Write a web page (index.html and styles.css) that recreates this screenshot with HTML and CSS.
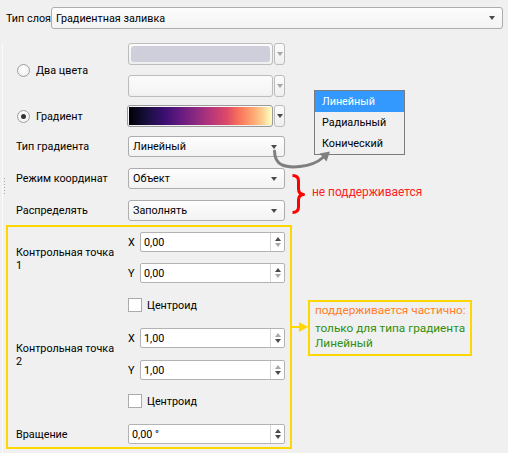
FILE: index.html
```html
<!DOCTYPE html>
<html lang="ru">
<head>
<meta charset="utf-8">
<link rel="stylesheet" href="styles.css">
</head>
<body>
<div class="page">
  <div class="top-row">
    <span class="top-label">Тип слоя</span>
    <div class="combo top-combo"><span>Градиентная заливка</span><i class="arrow"></i></div>
  </div>

  <div class="panel">
    <div class="form">
      <div class="row color-two">
        <div class="lbl"><span class="radio"></span>Два цвета</div>
        <div class="field stack">
          <div class="color-line">
            <div class="color-btn"><div class="swatch grey"></div></div>
            <div class="mini-btn"><i class="arrow light"></i></div>
          </div>
          <div class="color-line">
            <div class="color-btn"><div class="swatch white"></div></div>
            <div class="mini-btn"><i class="arrow light"></i></div>
          </div>
        </div>
      </div>

      <div class="row color-grad">
        <div class="lbl"><span class="radio checked"></span>Градиент</div>
        <div class="field color-line">
          <div class="color-btn grad-btn"><div class="swatch magma"></div></div>
          <div class="mini-btn"><i class="arrow"></i></div>
        </div>
      </div>

      <div class="row combo-row first">
        <div class="lbl">Тип градиента</div>
        <div class="field combo"><span>Линейный</span><i class="arrow"></i></div>
      </div>
      <div class="row combo-row">
        <div class="lbl">Режим координат</div>
        <div class="field combo"><span>Объект</span><i class="arrow"></i></div>
      </div>
      <div class="row combo-row">
        <div class="lbl">Распределять</div>
        <div class="field combo"><span>Заполнять</span><i class="arrow"></i></div>
      </div>
    </div>

    <div class="ybox">
      <div class="point p1">
        <div class="pt-top">
          <div class="lbl">Контрольная точка<br>1</div>
          <div class="xy">
            <div class="xy-row"><span class="axis">X</span><div class="spin"><span>0,00</span><div class="spin-btns"><i class="up"></i><i class="down dim"></i></div></div></div>
            <div class="xy-row second"><span class="axis">Y</span><div class="spin"><span>0,00</span><div class="spin-btns"><i class="up"></i><i class="down dim"></i></div></div></div>
          </div>
        </div>
        <div class="chk-row"><span class="check"></span>Центроид</div>
      </div>

      <div class="point p2">
        <div class="pt-top">
          <div class="lbl">Контрольная точка<br>2</div>
          <div class="xy">
            <div class="xy-row"><span class="axis">X</span><div class="spin"><span>1,00</span><div class="spin-btns"><i class="up dim"></i><i class="down"></i></div></div></div>
            <div class="xy-row second"><span class="axis">Y</span><div class="spin"><span>1,00</span><div class="spin-btns"><i class="up dim"></i><i class="down"></i></div></div></div>
          </div>
        </div>
        <div class="chk-row"><span class="check"></span>Центроид</div>
      </div>

      <div class="rot-row">
        <div class="lbl">Вращение</div>
        <div class="spin rot"><span>0,00 °</span><div class="spin-btns"><i class="up"></i><i class="down"></i></div></div>
      </div>
    </div>
  </div>

  <div class="splitter"></div>

  <!-- annotations -->
  <div class="popup">
    <div class="item sel">Линейный</div>
    <div class="item">Радиальный</div>
    <div class="item">Конический</div>
  </div>

  <svg class="overlay" width="508" height="453" viewBox="0 0 508 453">
    <path d="M274.5 151 C274.5 166 286 168 300 166.5 C311 165.3 318 162 323 157.5" fill="none" stroke="#7f7f7f" stroke-width="3" stroke-linecap="round"/>
    <polygon points="330,151.5 319.5,153.5 326.5,161.5" fill="#7f7f7f"/>
    <path d="M292.5 175.5 Q298.5 175.5 298.5 181 L298.5 189 Q298.5 194 303.5 194.5 Q298.5 195 298.5 200 L298.5 207 Q298.5 212.5 292.5 212.5" fill="none" stroke="#ff0000" stroke-width="3" stroke-linejoin="round"/>
    <line x1="292" y1="327" x2="301" y2="327" stroke="#ffd700" stroke-width="2"/>
    <polygon points="299,322 308,327 299,332" fill="#ffd700"/>
  </svg>

  <div class="note-red">не поддерживается</div>

  <div class="note-box">
    <div class="orange">поддерживается частично:</div>
    <div class="green">только для типа градиента<br>Линейный</div>
  </div>
</div>
</body>
</html>
```

FILE: styles.css
```css
* { box-sizing: border-box; }

html, body {
  margin: 0;
  padding: 0;
  background: #f0f0f0;
}

body {
  font-family: Roboto, "Noto Sans", sans-serif;
  font-size: 10.8px;
  color: #000;
}

.page {
  position: relative;
  width: 508px;
  height: 453px;
  overflow: hidden;
}

/* top row */
.top-row {
  display: flex;
  align-items: center;
  padding: 7px 5px 0 6px;
  height: 29px;
}

.top-label {
  width: 45px;
  flex: none;
  white-space: nowrap;
}

.combo {
  position: relative;
  display: flex;
  align-items: center;
  height: 21px;
  padding-left: 4px;
  border: 1px solid #adadad;
  border-radius: 3px;
  background: linear-gradient(#fdfdfd, #f3f3f3);
  white-space: nowrap;
}

.top-combo {
  flex: 1;
  height: 22px;
}

.arrow {
  position: absolute;
  right: 7px;
  top: 50%;
  margin-top: -2px;
  width: 0;
  height: 0;
  border-left: 3.5px solid transparent;
  border-right: 3.5px solid transparent;
  border-top: 4px solid #4a4a4a;
}

.arrow.light {
  border-top-color: #a6a6a6;
}

/* panel */
.panel {
  margin-left: 2px;
  border-left: 1px solid #fafafa;
  height: 424px;
}

.form {
  padding-left: 13px;
}

.row {
  display: flex;
  align-items: center;
}

.lbl {
  width: 112px;
  flex: none;
  display: flex;
  align-items: center;
  white-space: nowrap;
}

.field {
  width: 157px;
}

.color-two {
  margin-top: 14px;
}

.stack {
  display: flex;
  flex-direction: column;
  gap: 10px;
}

.color-line {
  display: flex;
  gap: 1px;
  height: 22px;
}

.color-btn {
  width: 145px;
  height: 22px;
  border: 1px solid #bcbcbc;
  border-radius: 3px;
  background: linear-gradient(#fbfbfb, #efefef);
  padding: 2px;
}

.swatch {
  width: 100%;
  height: 100%;
  border-radius: 3px;
}

.swatch.grey {
  background: #cfcfdc;
}

.swatch.white {
  background: linear-gradient(#fbfbfb, #f4f4f4);
}

.grad-btn {
  margin-left: -1px;
  width: 146px;
  border-color: #9b9b9b;
  padding: 1px;
}

.swatch.magma {
  border-radius: 0;
  background: linear-gradient(90deg,
    #000004 0%, #1c1044 14%, #3b0f70 25%, #641a80 36%,
    #8c2981 47%, #b73779 58%, #de4968 69%, #f7705c 77%,
    #fe9f6d 86%, #fecf92 94%, #fcfdbf 100%);
}

.mini-btn {
  position: relative;
  width: 11px;
  height: 22px;
  border: 1px solid #bcbcbc;
  border-radius: 3px;
  background: linear-gradient(#fbfbfb, #efefef);
}

.mini-btn .arrow {
  right: 1px;
}

.color-grad {
  margin-top: 8px;
}

.radio {
  display: inline-block;
  flex: none;
  width: 13px;
  height: 13px;
  border: 1px solid #a0a0a0;
  border-radius: 50%;
  background: radial-gradient(circle at 50% 40%, #ffffff, #ececec);
  margin: 0 6px 0 1px;
  position: relative;
}

.radio.checked::after {
  content: "";
  position: absolute;
  left: 3px;
  top: 3px;
  width: 5px;
  height: 5px;
  border-radius: 50%;
  background: #333;
}

.combo-row {
  margin-top: 11px;
}

.combo-row.first {
  margin-top: 9px;
}

/* yellow box */
.ybox {
  margin: 4px 0 0 3px;
  width: 286px;
  height: 224px;
  border: 2px solid #ffd700;
  padding: 5px 5px 0 8px;
}

.pt-top {
  display: flex;
  align-items: center;
}

.pt-top .lbl {
  display: block;
  line-height: 13px;
  padding-top: 2px;
}

.xy {
  display: flex;
  flex-direction: column;
}

.xy-row {
  display: flex;
  align-items: center;
  height: 20px;
}

.xy-row.second {
  margin-top: 11px;
}

.p2 .xy-row.second {
  margin-top: 12px;
}

.axis {
  width: 12px;
  flex: none;
}

.spin {
  position: relative;
  display: flex;
  align-items: center;
  width: 145px;
  height: 20px;
  padding-left: 3px;
  border: 1px solid #b3b3b3;
  border-radius: 2px;
  background: #fff;
}

.spin-btns {
  position: absolute;
  right: 0;
  top: 0;
  bottom: 0;
  width: 14px;
  border-left: 1px solid #d8d8d8;
  display: flex;
  flex-direction: column;
  align-items: center;
  justify-content: center;
  gap: 2px;
}

.spin-btns i {
  width: 0;
  height: 0;
  border-left: 3.5px solid transparent;
  border-right: 3.5px solid transparent;
}

.spin-btns .up {
  border-bottom: 4px solid #4a4a4a;
}

.spin-btns .down {
  border-top: 4px solid #4a4a4a;
}

.spin-btns .up.dim {
  border-bottom-color: #a8a8a8;
}

.spin-btns .down.dim {
  border-top-color: #a8a8a8;
}

.chk-row {
  display: flex;
  align-items: center;
  height: 14px;
  padding-left: 112px;
  margin-top: 15px;
}

.check {
  display: inline-block;
  width: 14px;
  height: 14px;
  border: 1px solid #ababab;
  background: #fff;
  margin-right: 5px;
}

.p2 {
  margin-top: 16px;
}

.p2 .chk-row {
  margin-top: 14px;
}

.rot-row {
  display: flex;
  align-items: center;
  margin-top: 16px;
}

.spin.rot {
  width: 157px;
}

/* splitter handle */
.splitter {
  position: absolute;
  left: 4px;
  top: 178px;
  width: 1px;
  height: 18px;
  background: repeating-linear-gradient(#a9a9a9 0 1px, transparent 1px 3px);
}

/* annotations */
.popup {
  position: absolute;
  left: 314px;
  top: 90px;
  width: 91px;
  height: 65px;
  border: 1px solid #7c7c7c;
  background: #f0f0f0;
}

.item {
  height: 21px;
  line-height: 21px;
  padding-left: 7px;
}

.item.sel {
  background: #3399ff;
  color: #fff;
}

.overlay {
  position: absolute;
  left: 0;
  top: 0;
  pointer-events: none;
}

.note-red {
  position: absolute;
  left: 312px;
  top: 185px;
  font-size: 11.9px;
  color: #ff2020;
}

.note-box {
  position: absolute;
  left: 308px;
  top: 300px;
  width: 164px;
  height: 56px;
  border: 2px solid #ffd700;
  padding: 1px 0 0 5px;
  font-size: 11.8px;
  line-height: 15px;
}

.orange {
  color: #ff7f27;
  margin-bottom: 3px;
}

.green {
  color: #2f8f0f;
}
```
